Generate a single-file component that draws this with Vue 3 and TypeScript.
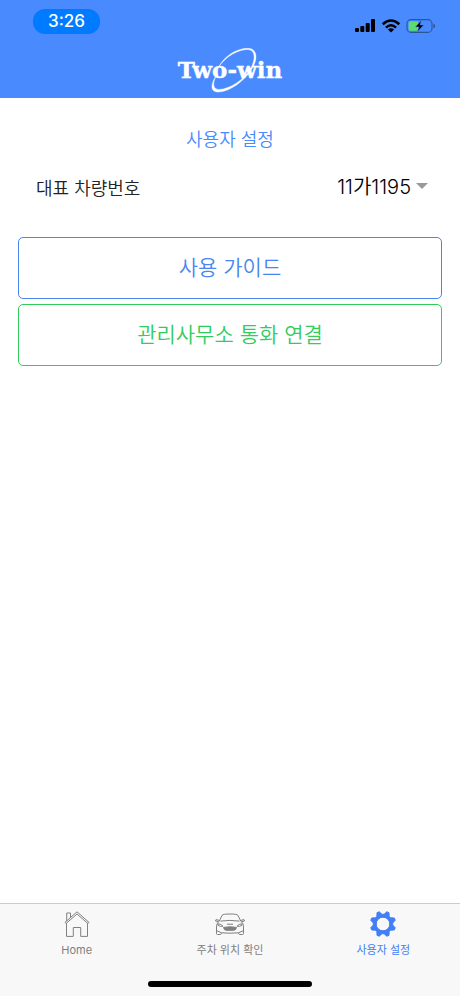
<script setup lang="ts">
import { ref } from 'vue'

type Tab = 'home' | 'parking' | 'settings'

const time = '3:26'
const plates: string[] = ['11가1195']
const plate = ref(plates[0])
const active = ref<Tab>('settings')

const tabs: { id: Tab; label: string }[] = [
  { id: 'home', label: 'Home' },
  { id: 'parking', label: '주차 위치 확인' },
  { id: 'settings', label: '사용자 설정' },
]

// Outline of an eight-toothed gear with a round hole, centred on 0,0.
function gearPath(teeth: number, outer: number, inner: number, hole: number): string {
  const step = (Math.PI * 2) / teeth
  const points: string[] = []
  for (let i = 0; i < teeth; i++) {
    const mid = (i + 0.5) * step
    const corners: [number, number][] = [
      [-0.36, inner],
      [-0.12, outer],
      [0.12, outer],
      [0.36, inner],
    ]
    for (const [offset, radius] of corners) {
      const a = mid + offset * step
      points.push(`${(Math.cos(a) * radius).toFixed(2)} ${(Math.sin(a) * radius).toFixed(2)}`)
    }
  }
  return `M${points.join('L')}ZM${hole} 0A${hole} ${hole} 0 1 0 ${-hole} 0A${hole} ${hole} 0 1 0 ${hole} 0Z`
}

const gear = gearPath(8, 12.8, 9.8, 6.8)
</script>

<template>
  <div class="screen">
    <header class="header">
      <div class="status">
        <span class="time">{{ time }}</span>
        <div class="indicators">
          <svg width="22" height="14" viewBox="0 0 22 14" aria-hidden="true">
            <rect x="1" y="9" width="4" height="4" rx="1" />
            <rect x="6.3" y="7" width="4" height="6" rx="1" />
            <rect x="11.7" y="4" width="4" height="9" rx="1" />
            <rect x="17" y="0" width="4" height="13" rx="1" />
          </svg>
          <svg width="20" height="14" viewBox="0 0 20 14" fill="none" stroke="#000" aria-hidden="true">
            <path d="M1.7 5.2Q10-2.2 18.3 5.2" stroke-width="2.6" />
            <path d="M4.9 8.6Q10 4 15.1 8.6" stroke-width="2.5" />
            <path d="M10 13.5L6.9 10.5Q10 8 13.1 10.5Z" fill="#000" stroke="none" />
          </svg>
          <svg width="30" height="14" viewBox="0 0 30 14" aria-hidden="true">
            <rect x="1" y="0.6" width="25" height="12.8" rx="4" fill="none" stroke="#2c5599" stroke-width="1.1" />
            <path d="M4.5 2.3H12V11.7H4.5Q2.7 11.7 2.7 9.9V4.1Q2.7 2.3 4.5 2.3Z" fill="#5bdc70" />
            <path d="M27.4 4.7Q29.2 5.3 29.2 7T27.4 9.3Z" fill="#2c5599" />
            <path d="M15.6 1L9.4 7.9H13L11.3 13L17.7 5.9H14Z" stroke="#4a8aff" stroke-width="0.5" />
          </svg>
        </div>
      </div>
      <svg class="logo" width="114" height="50" viewBox="0 0 114 50" role="img" aria-label="Two-win">
        <text x="57" y="33" text-anchor="middle">Two-win</text>
        <path
          d="M44.5 29C39 37 39.5 44.5 46 44.5C57 44 71 35 78 23C83 13 82 5 75 4.5C65 4.5 53 11 45 23C51 11 64 3.3 75 3.3C84 3.3 85 13 80 22C73 35 57 47 45 47C36 47 38 37 44.5 29Z"
        />
      </svg>
    </header>

    <main class="content">
      <h1 class="title">사용자 설정</h1>
      <div class="field">
        <label for="plate">대표 차량번호</label>
        <div class="picker">
          <select id="plate" v-model="plate">
            <option v-for="p in plates" :key="p" :value="p">{{ p }}</option>
          </select>
          <svg width="12" height="8" viewBox="0 0 12 8" aria-hidden="true"><path d="M0 0H12L6 6Z" fill="#999" /></svg>
        </div>
      </div>
      <div class="actions">
        <button type="button" class="action guide">사용 가이드</button>
        <button type="button" class="action call">관리사무소 통화 연결</button>
      </div>
    </main>

    <footer class="footer">
      <nav class="tabs">
        <button
          v-for="tab in tabs"
          :key="tab.id"
          type="button"
          class="tab"
          :class="{ active: active === tab.id }"
          @click="active = tab.id"
        >
          <svg v-if="tab.id === 'home'" width="32" height="28" viewBox="-16 -14 32 28" fill="none" stroke="currentColor" stroke-width="1" aria-hidden="true">
            <path d="M-12-1.6L0-12.2L12-1.6L11 -.4L0-10L-11-.4Z" />
            <path d="M-10.3-3V-11H-6.5V-6.6M-10.5-.8V12.4H-3.7V3.5H3.7V12.4H10.5V-.8" />
          </svg>
          <svg v-else-if="tab.id === 'parking'" width="32" height="28" viewBox="-16 -14 32 28" fill="none" stroke="currentColor" stroke-width="1" aria-hidden="true">
            <path d="M-11-2.5L-7.8-8.8Q-7-10 0-10T7.8-8.8L11-2.5M-9.6-2.9Q0-4.3 9.6-2.9" />
            <path d="M-10.5-3.5L-14-4.4L-14.5-3L-11.5-2.3Q-13.5-.5-13.5 3V9.5Q-13.5 10.5-12.5 10.5H-9.5Q-8.8 10.5-8.5 8.8Q0 9.6 8.5 8.8Q8.8 10.5 9.5 10.5H12.5Q13.5 10.5 13.5 9.5V3Q13.5-.5 11.5-2.3L14.5-3L14-4.4L10.5-3.5" />
            <path d="M-12-.2Q-9-.1-7 2.2Q-9.5 3-11.8 1.4ZM12-.2Q9-.1 7 2.2Q9.5 3 11.8 1.4ZM-3 .2H3M-13 6.8L-8.5 8.8M13 6.8L8.5 8.8" />
            <path d="M-6.5 3.4Q0 2.2 6.5 3.4Q6 6.3 3.5 6.3H-3.5Q-6 6.3-6.5 3.4Z" fill="currentColor" />
          </svg>
          <svg v-else width="32" height="28" viewBox="-16 -14 32 28" aria-hidden="true">
            <path :d="gear" fill="currentColor" fill-rule="evenodd" stroke="currentColor" stroke-width="1" stroke-linejoin="round" />
          </svg>
          <span class="tab-label">{{ tab.label }}</span>
        </button>
      </nav>
      <div class="indicator"></div>
    </footer>
  </div>
</template>

<style>
body {
  margin: 0;
  background: #fff;
}
</style>

<style scoped>
.screen {
  display: flex;
  flex-direction: column;
  min-height: 100vh;
  color: #222;
  font-family: Inter, "Noto Sans CJK KR", sans-serif;
  font-weight: 350;
}

.header {
  box-sizing: border-box;
  display: flex;
  flex-direction: column;
  align-items: center;
  height: 98px;
  padding-top: 9px;
  background: #4a8aff;
}

.status {
  box-sizing: border-box;
  display: flex;
  align-items: center;
  justify-content: space-between;
  width: 100%;
  height: 25px;
  padding: 0 24px 0 33px;
}

.time {
  width: 67px;
  border-radius: 12px;
  background: #007aff;
  color: #fff;
  font-size: 17px;
  font-weight: 500;
  line-height: 25px;
  text-align: center;
}

.indicators {
  display: flex;
  align-items: center;
  gap: 5px;
  padding-top: 8px;
}

.logo {
  margin-top: 11px;
  fill: #fff;
  stroke: #fff;
  stroke-width: 0.4px;
  font-family: "DejaVu Serif", serif;
  font-size: 23px;
  font-weight: 700;
}

.content {
  flex: 1;
  padding: 29px 18px;
}

.title {
  margin: 0;
  color: #4a8aff;
  font-size: 18px;
  font-weight: 350;
  line-height: 26px;
  text-align: center;
}

.field {
  display: flex;
  align-items: center;
  justify-content: space-between;
  height: 28px;
  margin: 20px 14px 36px 18px;
  font-size: 18px;
}

.picker {
  display: flex;
  align-items: center;
  gap: 5px;
}

select {
  appearance: none;
  field-sizing: content;
  padding: 0;
  border: 0;
  background: none;
  color: #000;
  font: inherit;
  font-size: 20px;
}

.actions {
  display: flex;
  flex-direction: column;
  gap: 5px;
}

.action {
  height: 62px;
  padding: 0 0 4px;
  border: 1px solid currentColor;
  border-radius: 5px;
  background: #fff;
  font: inherit;
  font-size: 21px;
}

.guide {
  color: #4a86f0;
}

.call {
  color: #32cc5c;
}

.footer {
  display: flex;
  flex-direction: column;
  align-items: center;
  border-top: 1px solid #ccc;
  background: #f8f8f8;
}

.tabs {
  display: flex;
  width: 100%;
}

.tab {
  flex: 1;
  display: flex;
  flex-direction: column;
  align-items: center;
  gap: 4px;
  height: 76px;
  padding: 6px 0 0;
  border: 0;
  background: none;
  color: #808080;
  font: inherit;
}

.tab.active {
  color: #427ff5;
}

.tab-label {
  font-size: 11px;
  font-weight: 400;
  line-height: 16px;
}

.indicator {
  width: 164px;
  height: 6px;
  margin: 1px 0 9px;
  border-radius: 3px;
  background: #000;
}
</style>
